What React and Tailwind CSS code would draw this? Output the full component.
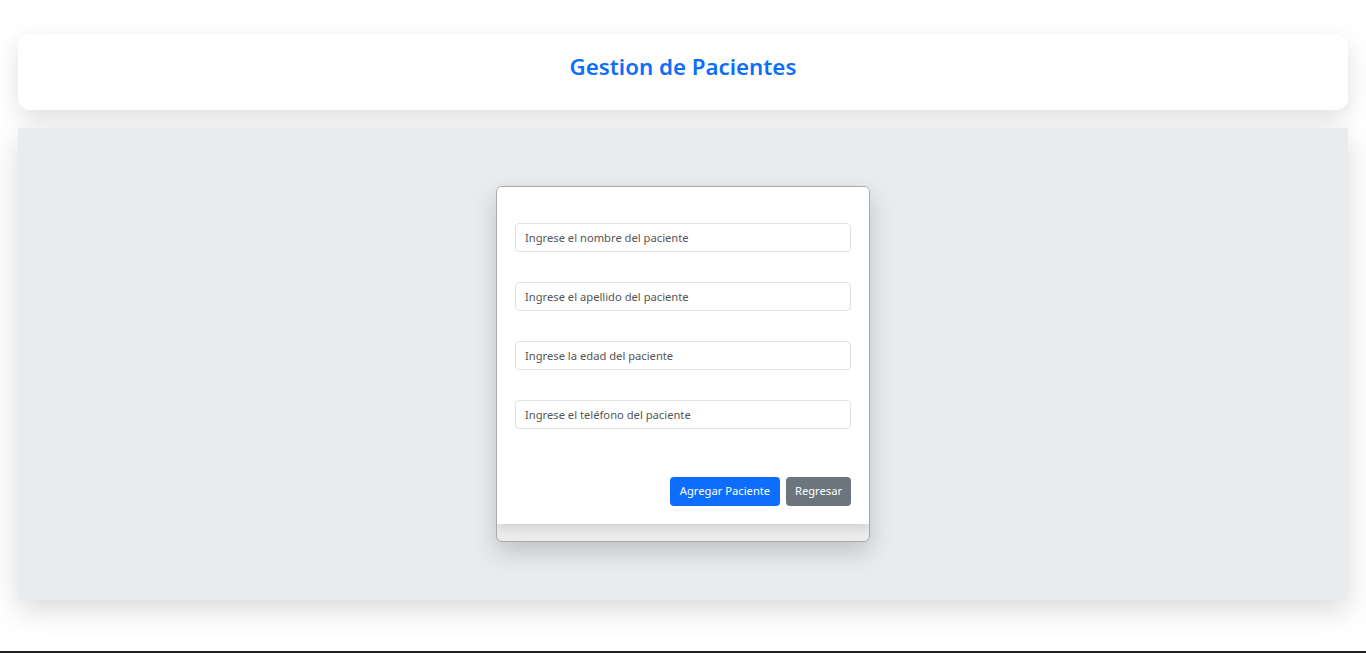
import { useState } from 'react'

const font = { fontFamily: '"Noto Sans", "Open Sans", sans-serif' }

const fields = [
  { name: 'nombre', placeholder: 'Ingrese el nombre del paciente' },
  { name: 'apellido', placeholder: 'Ingrese el apellido del paciente' },
  { name: 'edad', placeholder: 'Ingrese la edad del paciente' },
  { name: 'telefono', placeholder: 'Ingrese el teléfono del paciente' },
]

export default function App() {
  const [form, setForm] = useState({ nombre: '', apellido: '', edad: '', telefono: '' })

  return (
    <div className="relative min-h-[653px] bg-white overflow-hidden" style={font}>
      <div className="px-[18px] pt-[34px]">
        {/* Header */}
        <div className="h-[76px] rounded-xl bg-white shadow-[0_8px_24px_rgba(0,0,0,0.13)] flex items-center justify-center pb-[10px]">
          <h1 className="text-[22.3px] font-semibold text-[#0d6efd] leading-none">Gestion de Pacientes</h1>
        </div>

        {/* Main panel */}
        <div className="mt-[18px] h-[472px] bg-[#e9ecef] shadow-[0_10px_28px_rgba(0,0,0,0.15)] flex justify-center pt-[58px]">
          <div className="w-[374px] h-[356px] rounded-md border border-[#a9a9a9] bg-[#ececec] shadow-[0_10px_24px_rgba(0,0,0,0.18)] overflow-hidden">
            <div className="bg-white h-[337px] px-[18px] pt-[36px] shadow-[0_4px_10px_rgba(0,0,0,0.12)] flex flex-col">
              <div className="flex flex-col gap-[30px]">
                {fields.map(f => (
                  <input
                    key={f.name}
                    value={form[f.name]}
                    onChange={e => setForm({ ...form, [f.name]: e.target.value })}
                    placeholder={f.placeholder}
                    className="h-[29px] w-full rounded border border-[#dee2e6] px-[9px] text-[11.2px] text-[#444] placeholder:text-[#555] outline-none"
                  />
                ))}
              </div>
              <div className="mt-[48px] flex justify-end gap-[6px]">
                <button className="h-[29px] w-[110px] rounded bg-[#0d6efd] text-white text-[11.2px]">Agregar Paciente</button>
                <button className="h-[29px] w-[65px] rounded bg-[#6c757d] text-white text-[11.2px]">Regresar</button>
              </div>
            </div>
          </div>
        </div>
      </div>
      <div className="absolute bottom-0 left-0 right-0 h-[2px] bg-[#222]" />
    </div>
  )
}
